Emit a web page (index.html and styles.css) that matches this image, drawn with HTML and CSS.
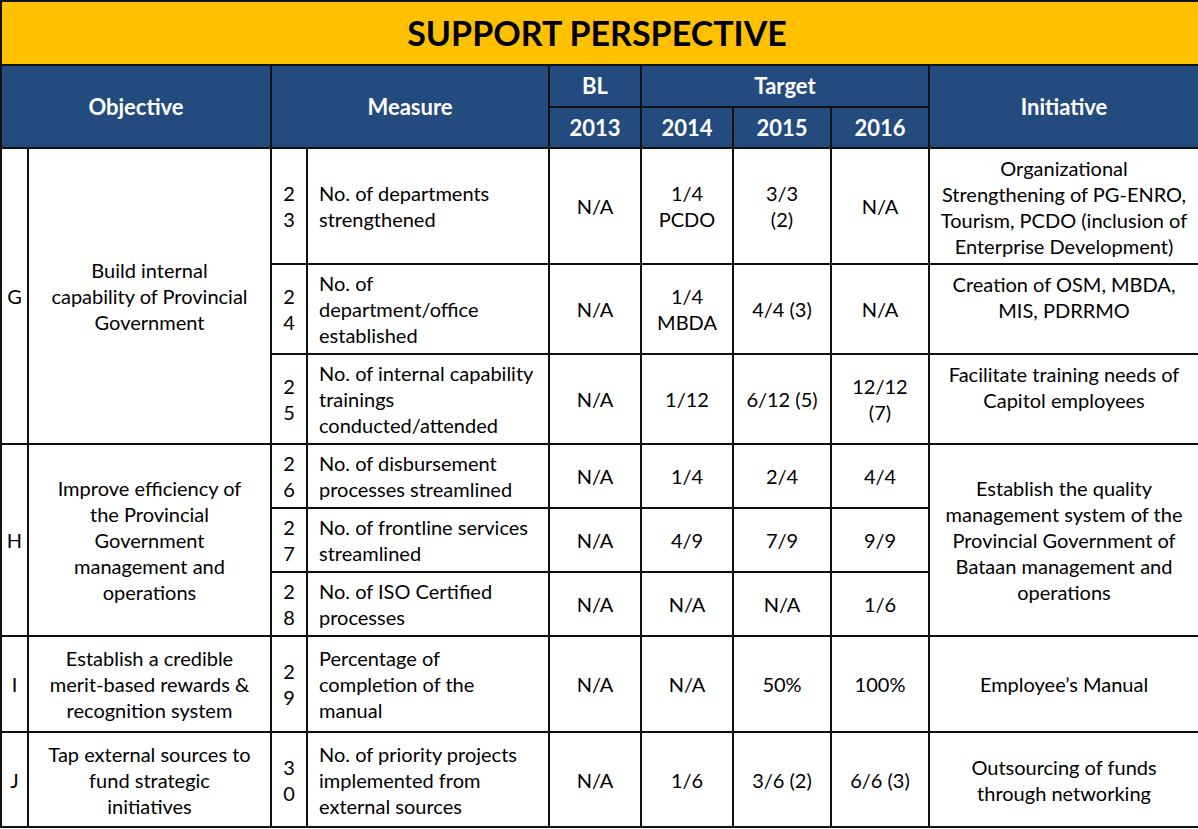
FILE: index.html
```html
<!DOCTYPE html>
<html>
<head>
<meta charset="utf-8">
<link rel="stylesheet" href="styles.css">
</head>
<body>
<table class="grid">
  <colgroup>
    <col class="c-letter"><col class="c-obj"><col class="c-num"><col class="c-measure">
    <col class="c-bl"><col class="c-y14"><col class="c-y15"><col class="c-y16"><col class="c-init">
  </colgroup>
  <thead>
    <tr class="r-title"><th colspan="9" class="title">SUPPORT PERSPECTIVE</th></tr>
    <tr class="r-h1">
      <th colspan="2" rowspan="2" class="head">Objective</th>
      <th colspan="2" rowspan="2" class="head">Measure</th>
      <th class="head">BL</th>
      <th colspan="3" class="head">Target</th>
      <th rowspan="2" class="head">Initiative</th>
    </tr>
    <tr class="r-h2">
      <th class="head">2013</th>
      <th class="head">2014</th>
      <th class="head">2015</th>
      <th class="head">2016</th>
    </tr>
  </thead>
  <tbody>
    <tr class="r-23">
      <td rowspan="3" class="letter">G</td>
      <td rowspan="3" class="obj">Build internal<br>capability of Provincial<br>Government</td>
      <td class="num">2<br>3</td>
      <td class="measure">No. of departments<br>strengthened</td>
      <td class="val">N/A</td>
      <td class="val">1/4<br>PCDO</td>
      <td class="val">3/3<br>(2)</td>
      <td class="val">N/A</td>
      <td class="init top">Organizational<br>Strengthening of PG-ENRO,<br>Tourism, PCDO (inclusion of<br>Enterprise Development)</td>
    </tr>
    <tr class="r-24">
      <td class="num">2<br>4</td>
      <td class="measure">No. of<br>department/office<br>established</td>
      <td class="val">N/A</td>
      <td class="val">1/4<br>MBDA</td>
      <td class="val">4/4 (3)</td>
      <td class="val">N/A</td>
      <td class="init top">Creation of OSM, MBDA,<br>MIS, PDRRMO</td>
    </tr>
    <tr class="r-25">
      <td class="num">2<br>5</td>
      <td class="measure">No. of internal capability<br>trainings<br>conducted/attended</td>
      <td class="val">N/A</td>
      <td class="val">1/12</td>
      <td class="val">6/12 (5)</td>
      <td class="val">12/12<br>(7)</td>
      <td class="init top">Facilitate training needs of<br>Capitol employees</td>
    </tr>
    <tr class="r-26">
      <td rowspan="3" class="letter">H</td>
      <td rowspan="3" class="obj">Improve efficiency of<br>the Provincial<br>Government<br>management and<br>operations</td>
      <td class="num">2<br>6</td>
      <td class="measure">No. of disbursement<br>processes streamlined</td>
      <td class="val">N/A</td>
      <td class="val">1/4</td>
      <td class="val">2/4</td>
      <td class="val">4/4</td>
      <td rowspan="3" class="init">Establish the quality<br>management system of the<br>Provincial Government of<br>Bataan management and<br>operations</td>
    </tr>
    <tr class="r-27">
      <td class="num">2<br>7</td>
      <td class="measure">No. of frontline services<br>streamlined</td>
      <td class="val">N/A</td>
      <td class="val">4/9</td>
      <td class="val">7/9</td>
      <td class="val">9/9</td>
    </tr>
    <tr class="r-28">
      <td class="num">2<br>8</td>
      <td class="measure">No. of ISO Certified<br>processes</td>
      <td class="val">N/A</td>
      <td class="val">N/A</td>
      <td class="val">N/A</td>
      <td class="val">1/6</td>
    </tr>
    <tr class="r-29">
      <td class="letter">I</td>
      <td class="obj">Establish a credible<br>merit-based rewards &amp;<br>recognition system</td>
      <td class="num">2<br>9</td>
      <td class="measure">Percentage of<br>completion of the<br>manual</td>
      <td class="val">N/A</td>
      <td class="val">N/A</td>
      <td class="val">50%</td>
      <td class="val">100%</td>
      <td class="init">Employee’s Manual</td>
    </tr>
    <tr class="r-30">
      <td class="letter">J</td>
      <td class="obj">Tap external sources to<br>fund strategic<br>initiatives</td>
      <td class="num">3<br>0</td>
      <td class="measure">No. of priority projects<br>implemented from<br>external sources</td>
      <td class="val">N/A</td>
      <td class="val">1/6</td>
      <td class="val">3/6 (2)</td>
      <td class="val">6/6 (3)</td>
      <td class="init">Outsourcing of funds<br>through networking</td>
    </tr>
  </tbody>
</table>
</body>
</html>
```

FILE: styles.css
```css
html, body {
  margin: 0;
  padding: 0;
  background: #ffffff;
}

.grid {
  width: 1198px;
  table-layout: fixed;
  border-collapse: collapse;
  font-family: Lato, "Open Sans", sans-serif;
  font-size: 20px;
  line-height: 26px;
  color: #000;
}

.c-letter { width: 27px; }
.c-obj { width: 243px; }
.c-num { width: 36px; }
.c-measure { width: 242px; }
.c-bl { width: 92px; }
.c-y14 { width: 92px; }
.c-y15 { width: 98px; }
.c-y16 { width: 98px; }
.c-init { width: 270px; }

.grid th,
.grid td {
  border: 2px solid #111;
  padding: 0;
  text-align: center;
  vertical-align: middle;
}

.grid .title {
  background: #ffc000;
  font-size: 34px;
  font-weight: 700;
  height: 62px;
  padding-right: 6px;
}

.grid .head {
  background: #234b7e;
  color: #ffffff;
  font-size: 22px;
  font-weight: 700;
}

.r-h1 { height: 42px; }
.r-h2 { height: 41px; }

.r-23 { height: 116px; }
.r-24 { height: 90px; }
.r-25 { height: 90px; }
.r-26 { height: 64px; }
.r-27 { height: 64px; }
.r-28 { height: 64px; }
.r-29 { height: 96px; }
.r-30 { height: 95px; }

.grid .obj { padding: 0 4px; }
.grid .measure {
  text-align: left;
  padding-left: 11px;
  padding-right: 2px;
}
.grid .init { padding: 0 3px; }
.grid .init.top {
  vertical-align: top;
  padding-top: 6px;
}
```
